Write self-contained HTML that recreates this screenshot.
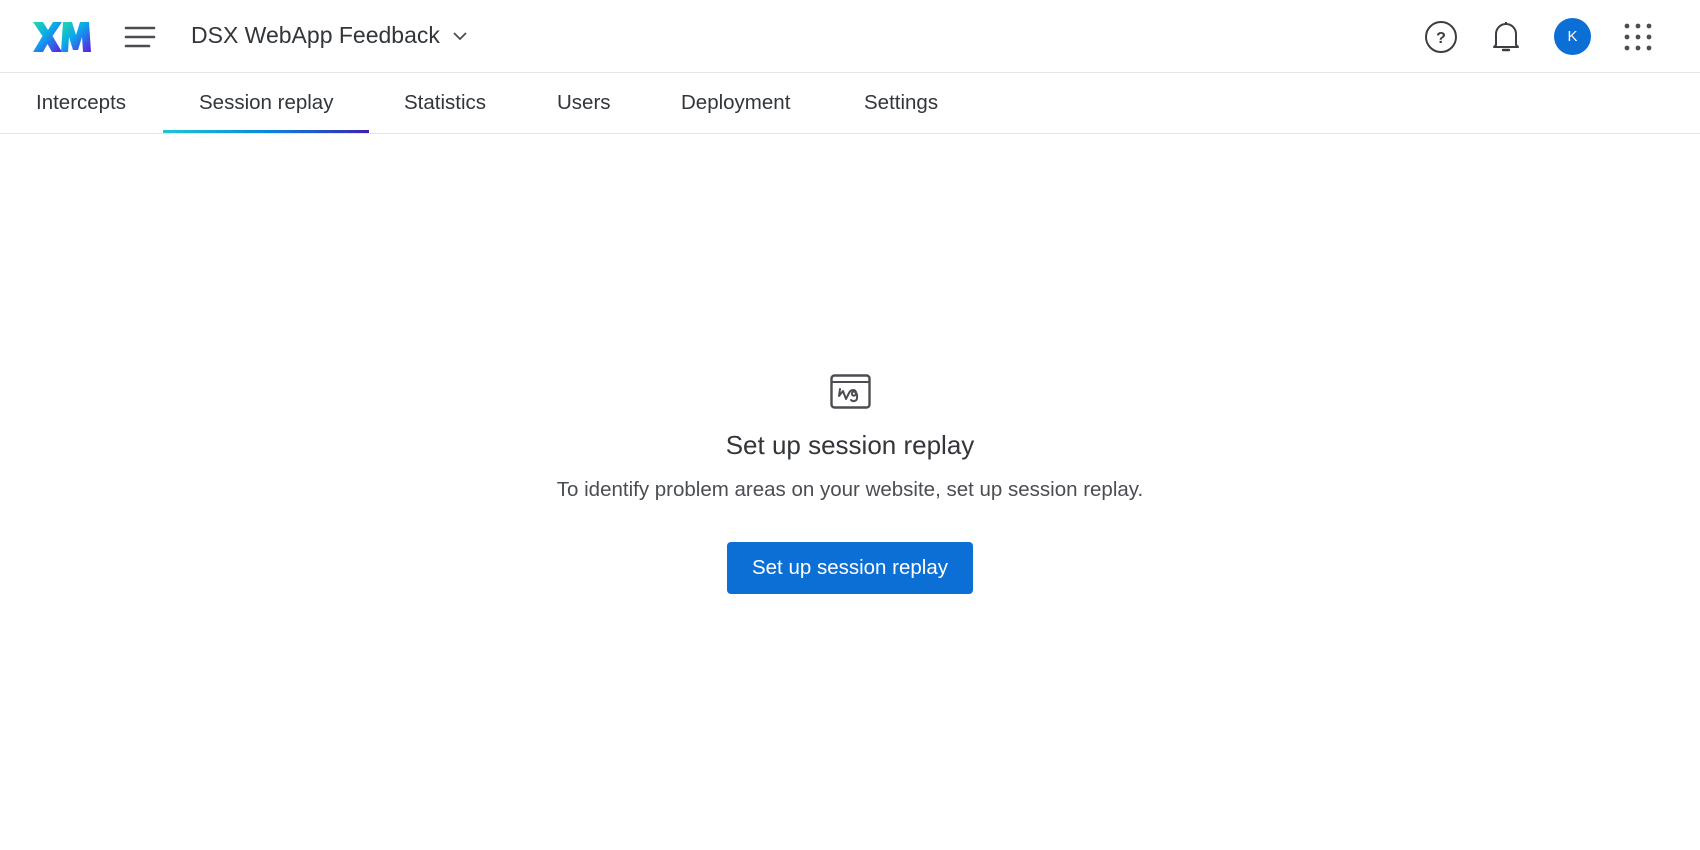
<!DOCTYPE html>
<html><head><meta charset="utf-8"><style>
*{margin:0;padding:0;box-sizing:border-box}
body{width:1700px;height:850px;background:#fff;font-family:"Liberation Sans",sans-serif;color:#32363a;position:relative;overflow:hidden}
.abs{position:absolute}
.hdr{left:0;top:0;width:1700px;height:73px;border-bottom:1px solid #e6e6e8}
.tabs{left:0;top:73px;width:1700px;height:61px;border-bottom:1px solid #e6e6e8}
.tab{position:absolute;top:18px;font-size:20.5px;color:#32363a;white-space:nowrap}
</style></head><body>
<div class="abs hdr"></div>
<svg class="abs" style="left:33px;top:21px" width="58" height="32" viewBox="0 0 58 32">
<defs><linearGradient id="g" x1="0" y1="0" x2="1" y2="1"><stop offset="0" stop-color="#21dbaa"/><stop offset="0.45" stop-color="#0ba5ec"/><stop offset="1" stop-color="#5f1ae5"/></linearGradient></defs>
<path fill="url(#g)" d="M0 1h10l5 8 5-8h9l-9.5 14L29 31h-10l-4.5-8L10 31H0l9.5-16z"/>
<path fill="url(#g)" d="M28 31L30 1h9l4 13 4-13h9l2 30h-8l-1-15-4 13h-5l-4-13-1 15z"/>
</svg>
<svg class="abs" style="left:124px;top:25px" width="32" height="24"><g stroke="#4a4d52" stroke-width="2.6" stroke-linecap="round"><line x1="2" y1="3" x2="30" y2="3"/><line x1="2" y1="12" x2="30" y2="12"/><line x1="2" y1="21" x2="25" y2="21"/></g></svg>
<div class="abs" style="left:191px;top:22px;font-size:23px;color:#32363a;white-space:nowrap">DSX WebApp Feedback</div>
<svg class="abs" style="left:452px;top:31px" width="16" height="10"><path d="M2 2l6 6 6-6" fill="none" stroke="#4a4d52" stroke-width="1.8"/></svg>
<svg class="abs" style="left:1424px;top:20px" width="34" height="34"><circle cx="17" cy="17" r="15" fill="none" stroke="#3b3e42" stroke-width="2"/><text x="17" y="23" text-anchor="middle" font-family="Liberation Sans" font-weight="bold" font-size="16" fill="#3b3e42">?</text></svg>
<svg class="abs" style="left:1490px;top:19px" width="32" height="34"><path d="M6 26V15a10 10 0 0 1 20 0v11l2 2H4z" fill="none" stroke="#3b3e42" stroke-width="2" stroke-linejoin="round"/><path d="M13 31h6" stroke="#3b3e42" stroke-width="2.4" stroke-linecap="round"/><path d="M16 3v2" stroke="#3b3e42" stroke-width="2"/></svg>
<div class="abs" style="left:1554px;top:18px;width:37px;height:37px;border-radius:50%;background:#0b6fd6;color:#fff;font-size:15px;text-align:center;line-height:37px">K</div>
<svg class="abs" style="left:1623px;top:22px" width="30" height="30"><g fill="#4a4d52"><circle cx="4" cy="4" r="2.4"/><circle cx="15" cy="4" r="2.4"/><circle cx="26" cy="4" r="2.4"/><circle cx="4" cy="15" r="2.4"/><circle cx="15" cy="15" r="2.4"/><circle cx="26" cy="15" r="2.4"/><circle cx="4" cy="26" r="2.4"/><circle cx="15" cy="26" r="2.4"/><circle cx="26" cy="26" r="2.4"/></g></svg>
<div class="abs tabs">
<div class="tab" style="left:36px">Intercepts</div>
<div class="tab" style="left:199px">Session replay</div>
<div class="tab" style="left:404px">Statistics</div>
<div class="tab" style="left:557px">Users</div>
<div class="tab" style="left:681px">Deployment</div>
<div class="tab" style="left:864px">Settings</div>
<div style="position:absolute;left:163px;top:57px;width:206px;height:3px;background:linear-gradient(90deg,#1fc4d6,#0b87e0 50%,#3a22b0)"></div>
</div>
<svg class="abs" style="left:830px;top:374px" width="41" height="36"><rect x="1.5" y="1.5" width="38" height="32" rx="3" fill="none" stroke="#4a4d52" stroke-width="2.4"/><line x1="2" y1="8" x2="39" y2="8" stroke="#4a4d52" stroke-width="2"/><path d="M10 15l-1 7 4-5 3 8 3-6c2-4 7-4 7 0s-5 3-4 0 6-1 5 5c0 3-4 4-6 2" fill="none" stroke="#4a4d52" stroke-width="2" stroke-linecap="round" stroke-linejoin="round"/></svg>
<div class="abs" style="left:0;width:1700px;top:430px;text-align:center;font-size:26px;color:#32363a">Set up session replay</div>
<div class="abs" style="left:0;width:1700px;top:478px;text-align:center;font-size:20.5px;color:#4a4d52">To identify problem areas on your website, set up session replay.</div>
<div class="abs" style="left:727px;top:542px;width:246px;height:52px;background:#0b6fd6;border-radius:4px;color:#fff;font-size:20.5px;text-align:center;line-height:52px">Set up session replay</div>
</body></html>
